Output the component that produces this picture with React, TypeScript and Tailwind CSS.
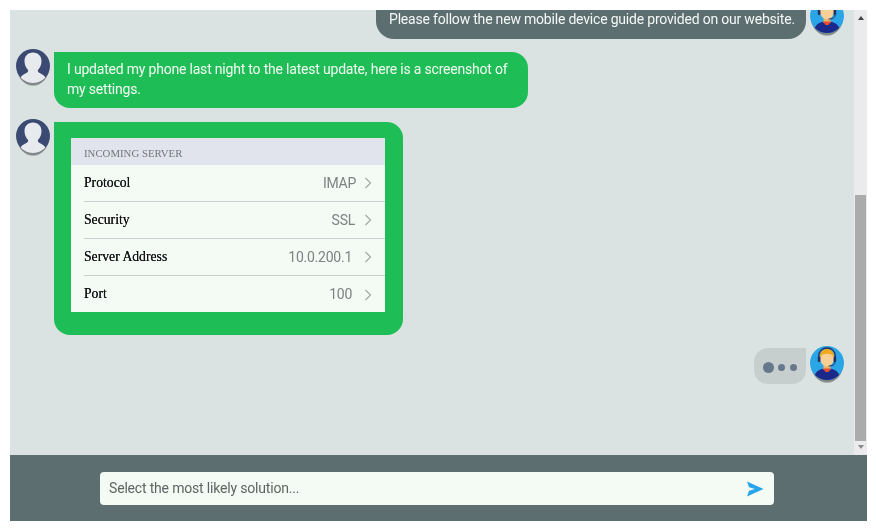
const Agent = ({ id }: { id: string }) => (
  <svg viewBox="0 0 34 40" className="w-[34px] h-[40px] shrink-0">
    <defs>
      <clipPath id={id}><circle cx="17" cy="17" r="17" /></clipPath>
    </defs>
    <ellipse cx="17" cy="21" rx="14.500" ry="16" fill="#6f7474" opacity="0.45" />
    <ellipse cx="17" cy="19.500" rx="16" ry="16.500" fill="#5f6464" opacity="0.55" />
    <circle cx="17" cy="17" r="17" fill="#2aa5e6" />
    <g clipPath={`url(#${id})`}>
      <path d="M3.500 36c0-10 5-13.500 13.500-13.500S30.500 26 30.500 36z" fill="#1b2a8a" />
      <rect x="13.500" y="17" width="7" height="7" fill="#eeb06b" />
      <path d="M13 22.500h8l-2.500 3.500h-3z" fill="#e8502f" />
      <ellipse cx="17" cy="12" rx="7" ry="8.500" fill="#f8cf96" />
      <path d="M9.800 12c0-6.500 3.200-9 7.200-9s7.200 2.500 7.200 9c-1.200-3-3.400-4.200-7.200-4.200S11 9 9.800 12z" fill="#f2a91d" />
      <path d="M8.800 13V10c0-5 3.500-8 8.200-8s8.200 3 8.200 8v3" fill="none" stroke="#25305f" strokeWidth="1.300" />
      <rect x="7.800" y="10.500" width="2.600" height="5.500" rx="1" fill="#25305f" />
      <rect x="23.600" y="10.500" width="2.600" height="5.500" rx="1" fill="#25305f" />
      <path d="M25 16c0 3-3 4-6.500 4" fill="none" stroke="#25305f" strokeWidth="1" />
    </g>
  </svg>
);

const User = ({ id }: { id: string }) => (
  <svg viewBox="0 0 34 40" className="w-[34px] h-[40px] shrink-0">
    <defs>
      <clipPath id={id}><circle cx="17" cy="17" r="17" /></clipPath>
    </defs>
    <ellipse cx="17" cy="21" rx="14.500" ry="16" fill="#6f7474" opacity="0.45" />
    <ellipse cx="17" cy="19.500" rx="16" ry="16.500" fill="#5f6464" opacity="0.55" />
    <circle cx="17" cy="17" r="17" fill="#3b4a72" />
    <g clipPath={`url(#${id})`}>
      <path d="M17 3.500c-5 0-8.500 3.500-8.500 8.500 0 4 1.500 6.500 3.200 8.500 1 1.300.5 2.400-.8 3.200-2 1.100-4.500 2-6 4.300v10h24.200V28c-1.500-2.300-4-3.200-6-4.300-1.300-.8-1.800-1.900-.8-3.200 1.700-2 3.200-4.500 3.200-8.500 0-5-3.500-8.500-8.500-8.500z" fill="#e8ebee" />
    </g>
  </svg>
);

const rows: [string, string, string][] = [
  ["Protocol", "IMAP", "mr-[8px]"],
  ["Security", "SSL", "mr-[9px]"],
  ["Server Address", "10.0.200.1", "mr-[12px]"],
  ["Port", "100", "mr-[12px]"],
];

const Chevron = () => (
  <svg viewBox="0 0 8 12" className="w-[8px] h-[12px] shrink-0">
    <path d="M1.500 1l5 5-5 5" fill="none" stroke="#a3a8a8" strokeWidth="1.200" />
  </svg>
);

export default function App() {
  return (
    <div className="w-[876px] h-[530px] bg-white pt-[10px] pb-[9px] pl-[10px] pr-[9px] font-['Roboto',sans-serif] blur-[0.5px]">
      <div className="w-[857px] h-[511px] flex flex-col">
        <div className="flex h-[445px] overflow-hidden">
          <div className="flex-1 bg-[#dae3e2] overflow-hidden pl-[6px] pr-[10px]">
            <div className="flex justify-end gap-[4px] mt-[-11px] h-[40px]">
              <div className="h-[40px] w-[430px] rounded-bl-[18px] rounded-br-[18px] bg-[#5c6e70] text-[#f4f8f6] text-[14px] tracking-[-0.2px] leading-[20px] pt-[10px] pl-[13px] whitespace-nowrap">
                Please follow the new mobile device guide provided on our website.
              </div>
              <Agent id="agentA" />
            </div>
            <div className="flex items-start gap-[4px] mt-[10px]">
              <User id="userA" />
              <div className="w-[474px] h-[56px] mt-[3px] bg-[#1fbd55] rounded-tr-[16px] rounded-br-[16px] rounded-bl-[16px] text-[#f3fbf5] text-[14px] tracking-[-0.2px] leading-[20px] pl-[13px] pt-[7px]">
                I updated my phone last night to the latest update, here is a screenshot of<br />my settings.
              </div>
            </div>
            <div className="flex items-start gap-[4px] mt-[11px]">
              <User id="userB" />
              <div className="w-[349px] h-[213px] mt-[3px] bg-[#1fbd55] rounded-tr-[16px] rounded-br-[16px] rounded-bl-[16px] pl-[17px] pt-[16px]">
                <div className="w-[314px] h-[174px] bg-[#f4fbf5]">
                  <div className="h-[27px] bg-[#e1e4ec] pl-[13px] font-['Liberation_Serif',serif] text-[10.8px] leading-[30px] text-[#71757c]">
                    INCOMING SERVER
                  </div>
                  {rows.map(([k, v, m], i) => (
                    <div key={k} className={`ml-[13px] h-[37px] flex items-center pr-[13px] ${i < 3 ? "border-b border-[#c8cfd0]" : ""}`}>
                      <span className="flex-1 font-['Liberation_Serif',serif] text-[13.7px] text-[#141416] [text-shadow:0_0_0.6px_#141416]">{k}</span>
                      <span className={`text-[14px] tracking-[-0.25px] text-[#7d8285] ${m}`}>{v}</span>
                      <Chevron />
                    </div>
                  ))}
                </div>
              </div>
            </div>
            <div className="flex justify-end items-start gap-[4px] mt-[11px]">
              <div className="w-[52px] h-[36px] mt-[2px] bg-[#c6cfce] rounded-tl-[14px] rounded-bl-[14px] rounded-br-[14px] flex items-center pl-[9px] gap-[4px] pt-[2px]">
                <span className="w-[11px] h-[11px] rounded-full bg-[#68788c]" />
                <span className="w-[7px] h-[7px] rounded-full bg-[#68788c]" />
                <span className="w-[7px] h-[7px] ml-[1px] rounded-full bg-[#68788c]" />
              </div>
              <Agent id="agentB" />
            </div>
          </div>
          <div className="w-[13px] bg-[#ebebee] flex flex-col items-center">
            <div className="w-0 h-0 mt-[6px] border-l-[3.500px] border-r-[3.500px] border-b-[4px] border-l-transparent border-r-transparent border-b-[#444]" />
            <div className="w-[11px] h-[246px] mt-[175px] bg-[#ababab]" />
            <div className="w-0 h-0 mt-[4px] border-l-[3.500px] border-r-[3.500px] border-t-[4px] border-l-transparent border-r-transparent border-t-[#8a8a8a]" />
          </div>
        </div>
        <div className="flex-1 bg-[#5c6e70] flex items-start pt-[17px] pl-[90px]">
          <div className="w-[674px] h-[33px] bg-[#f4fbf5] rounded-[4px] flex items-center pl-[9px] pr-[10px] justify-between">
            <span className="text-[14px] tracking-[-0.18px] text-[#5f6463]">Select the most likely solution...</span>
            <svg viewBox="0 0 18 16" className="w-[18px] h-[16px]">
              <path d="M1 .500L17.500 8 1 15.500 3 9.800 9 8 3 6.200z" fill="#27a5ec" />
            </svg>
          </div>
        </div>
      </div>
    </div>
  );
}
